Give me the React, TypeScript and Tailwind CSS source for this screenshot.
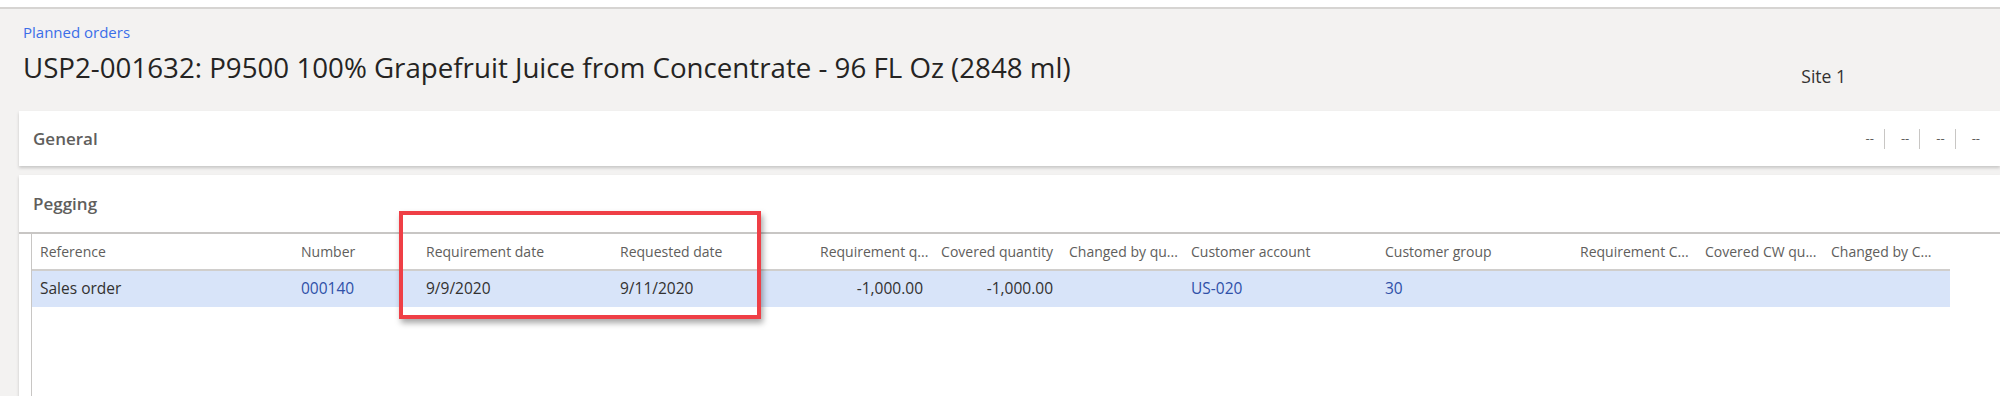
import React from "react";

const columns = [
    {label: "Reference", w: "w-[261px]", align: "text-left"},
    {label: "Number", w: "w-[125px]", align: "text-left"},
    {label: "Requirement date", w: "w-[194px]", align: "text-left"},
    {label: "Requested date", w: "w-[200px]", align: "text-left"},
    {label: "Requirement q...", w: "w-[119px]", align: "text-right"},
    {label: "Covered quantity", w: "w-[130px]", align: "text-right"},
    {label: "Changed by qu...", w: "w-[122px]", align: "text-left"},
    {label: "Customer account", w: "w-[194px]", align: "text-left"},
    {label: "Customer group", w: "w-[195px]", align: "text-left"},
    {label: "Requirement C...", w: "w-[125px]", align: "text-left"},
    {label: "Covered CW qu...", w: "w-[126px]", align: "text-left"},
    {label: "Changed by C...", w: "w-[127px]", align: "text-left"},
];

const row = [
    {value: "Sales order", link: false},
    {value: "000140", link: true},
    {value: "9/9/2020", link: false},
    {value: "9/11/2020", link: false},
    {value: "-1,000.00", link: false},
    {value: "-1,000.00", link: false},
    {value: "", link: false},
    {value: "US-020", link: true},
    {value: "30", link: true},
    {value: "", link: false},
    {value: "", link: false},
    {value: "", link: false},
];

export default function App() {
    return (
        <div className="w-[2000px] h-[396px] overflow-hidden bg-[#f3f2f1] text-[#323130] font-['Open_Sans',sans-serif]">
            <div className="h-[9px] bg-white border-b-2 border-[#d6d4d2]"/>

            <div className="h-[102px] pl-[23px] pt-[13px]">
                <a className="block text-[15px] leading-[20px] text-[#3b6ee8]">Planned orders</a>
                <div className="flex items-start mt-[6px]">
                    <h1 className="text-[27.7px] leading-[38px] text-[#252423]">
                        USP2-001632: P9500 100% Grapefruit Juice from Concentrate - 96 FL Oz (2848 ml)
                    </h1>
                    <div className="ml-auto mr-[154px] mt-[17px] text-[17.5px] leading-[22px]">Site 1</div>
                </div>
            </div>

            {/* General */}
            <div className="ml-[19px] h-[55px] bg-white shadow-[0_2px_3px_rgba(0,0,0,0.18)] flex items-center pl-[14px]">
                <span className="text-[17px] font-semibold text-[#605e5c]">General</span>
                <div className="ml-auto mr-[20px] flex items-center text-[13px] text-[#605e5c]">
                    <span className="pr-[10px]">--</span>
                    <span className="h-[20px] w-px bg-[#c8c6c4]"/>
                    <span className="pl-[16px] pr-[10px]">--</span>
                    <span className="h-[20px] w-px bg-[#c8c6c4]"/>
                    <span className="pl-[16px] pr-[10px]">--</span>
                    <span className="h-[20px] w-px bg-[#c8c6c4]"/>
                    <span className="pl-[16px]">--</span>
                </div>
            </div>

            {/* Pegging */}
            <div className="ml-[19px] mt-[9px] h-[230px] bg-white shadow-[0_2px_3px_rgba(0,0,0,0.18)] flex flex-col">
                <div className="h-[59px] shrink-0 flex items-center pl-[14px] border-b-2 border-[#c8c6c4]">
                    <span className="text-[17px] font-semibold text-[#605e5c]">Pegging</span>
                </div>
                <div className="relative flex-1 ml-[12px] border-l border-[#c8c6c4]">
                    <div className="flex h-[37px] w-[1918px] items-center border-b-2 border-[#d0cecc] text-[14px] text-[#605e5c]">
                        {columns.map((c, i) => (
                            <div key={i} className={`${c.w} ${c.align} shrink-0 px-[8px] whitespace-nowrap`}>{c.label}</div>
                        ))}
                    </div>
                    <div className="flex h-[36px] w-[1918px] items-center bg-[#d8e4f9] text-[15.5px]">
                        {columns.map((c, i) => (
                            <div key={i}
                                 className={`${c.w} ${c.align} shrink-0 px-[8px] whitespace-nowrap ${row[i].link ? "text-[#2f50a8]" : "text-[#323130]"}`}>
                                {row[i].value}
                            </div>
                        ))}
                    </div>

                    {/* highlight box */}
                    <div className="absolute left-[367px] top-[-23px] w-[362px] h-[108px] border-[4px] border-[#ef3f46] shadow-[2px_4px_6px_rgba(0,0,0,0.35)]"/>
                </div>
            </div>
        </div>
    );
}
